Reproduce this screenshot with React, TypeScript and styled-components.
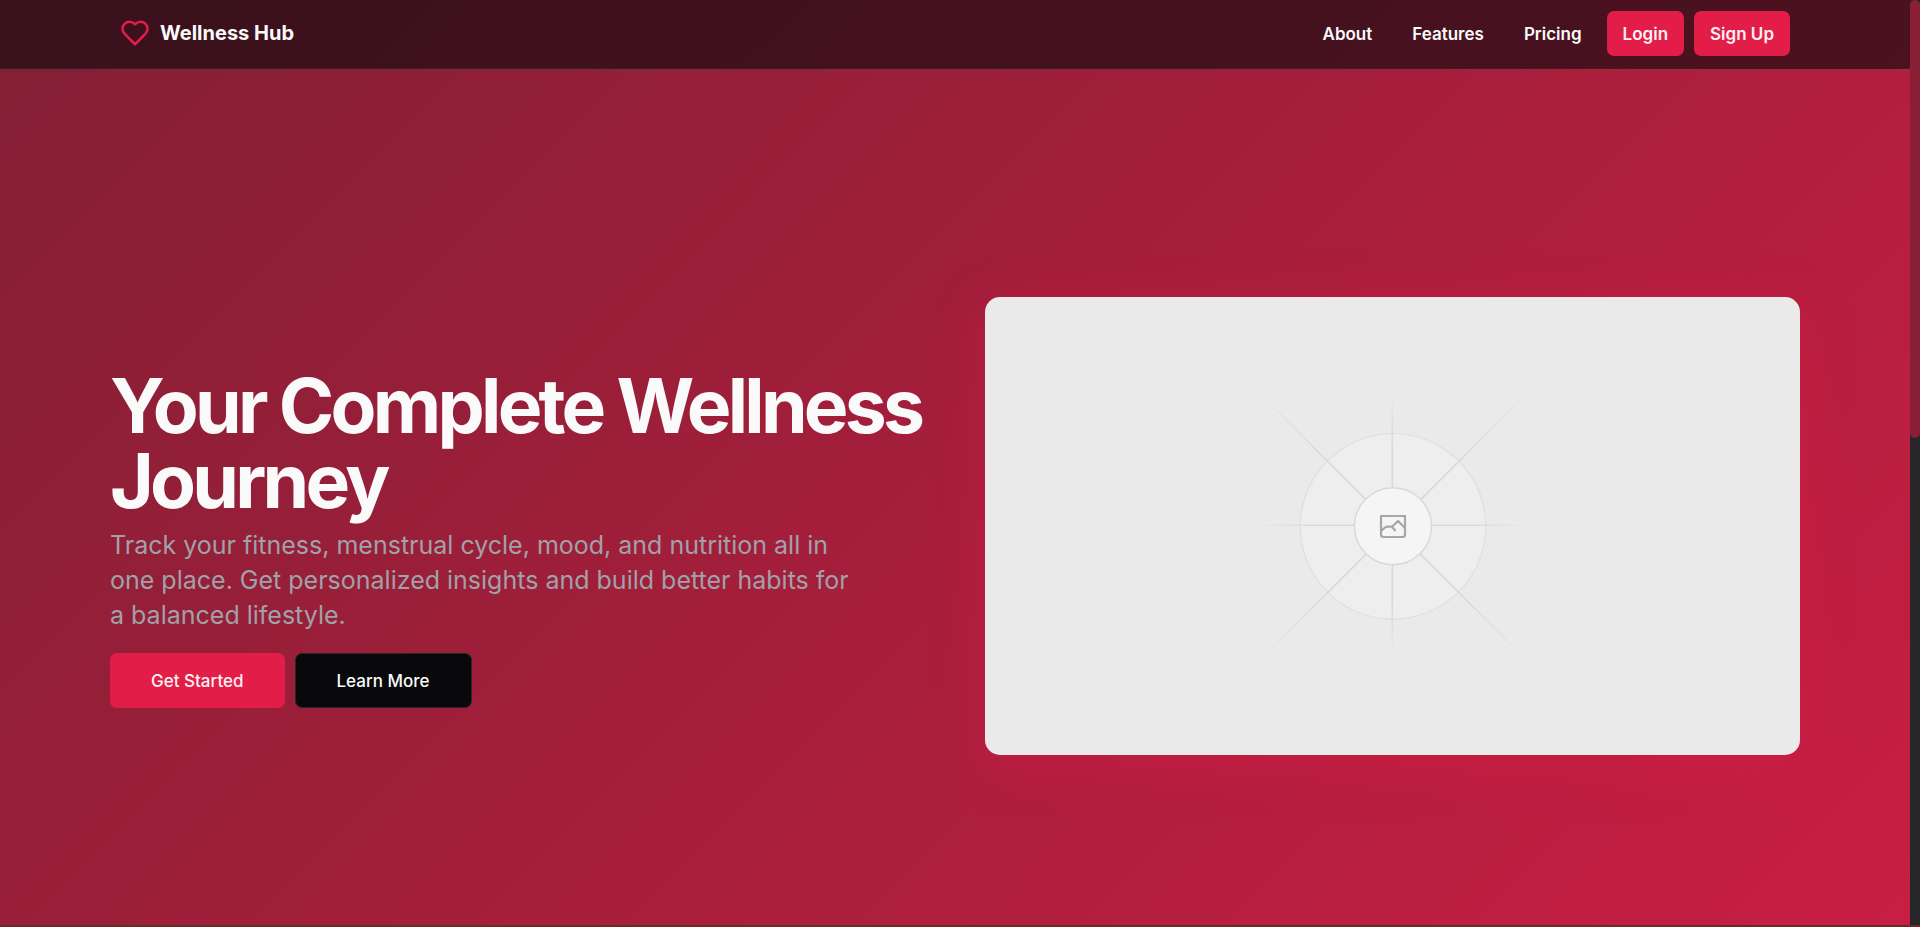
import React from "react";
import styled, { createGlobalStyle } from "styled-components";

const GlobalStyle = createGlobalStyle`
  *, *::before, *::after { box-sizing: border-box; }
  body {
    margin: 0;
    background: #09090b;
    color: #fafafa;
    font-family: Inter, "Liberation Sans", sans-serif;
  }
  h1, p { margin: 0; }
`;

const Screen = styled.div`
  display: grid;
  grid-template-columns: 1fr 10px;
  grid-template-rows: 1fr 2px;
  height: 100vh;
  overflow: hidden;
`;

const Page = styled.div`
  min-height: 0;
  overflow: hidden;
  background: linear-gradient(135deg, #821f34 0%, #c81e43 100%);
`;

const ScrollTrack = styled.div`
  background: #27272a;
`;

const ScrollThumb = styled.div`
  height: 438px;
  border-radius: 5px;
  background: #881f37;
`;

const BottomEdge = styled.div`
  grid-column: 1 / -1;
  background: #6b2a2a;
`;

const Header = styled.header`
  display: flex;
  align-items: center;
  justify-content: space-between;
  height: 69px;
  padding: 0 120px 2px;
  border-bottom: 1px solid #27272a;
  background: rgba(9, 9, 11, 0.6);
`;

const Brand = styled.a`
  display: flex;
  align-items: center;
  gap: 10px;
  color: #fafafa;
  font-size: 20px;
  font-weight: 700;
  line-height: 30px;
  text-decoration: none;
`;

const Nav = styled.nav`
  display: flex;
  align-items: center;
  gap: 10px;
`;

const NavLinks = styled.div`
  display: flex;
  gap: 40px;
  padding-right: 15px;
`;

const NavLink = styled.a`
  padding-top: 2px;
  color: #fafafa;
  font-size: 17px;
  font-weight: 600;
  line-height: 25px;
  text-decoration: none;
`;

const Button = styled.button<{ $size: "small" | "large"; $tone?: "dark" }>`
  height: ${(p) => (p.$size === "small" ? 45 : 55)}px;
  padding: 2px ${(p) => (p.$size === "small" ? 16 : 41)}px 0;
  border: ${(p) => (p.$tone === "dark" ? "1px solid #27272a" : "0")};
  border-radius: 7px;
  background: ${(p) => (p.$tone === "dark" ? "#09090b" : "#e11d48")};
  color: ${(p) => (p.$tone === "dark" ? "#fafafa" : "#fff1f2")};
  font-family: inherit;
  font-size: 17px;
  font-weight: ${(p) => (p.$size === "small" ? 600 : 500)};
  line-height: 25px;
  cursor: pointer;
`;

const Hero = styled.main`
  display: grid;
  grid-template-columns: 1fr 1fr;
  align-items: center;
  gap: 60px;
  min-height: calc(100vh - 13px);
  padding: 0 110px;
`;

const Copy = styled.section`
  display: flex;
  flex-direction: column;
  padding-top: 24px;
`;

const Title = styled.h1`
  font-size: 75px;
  font-weight: 700;
  line-height: 75px;
  letter-spacing: -0.05em;
`;

const Lead = styled.p`
  max-width: 750px;
  margin-top: 10px;
  color: #a1a1aa;
  font-size: 25px;
  line-height: 35px;
`;

const Actions = styled.div`
  display: flex;
  gap: 10px;
  margin-top: 20px;
`;

const Picture = styled.div`
  display: flex;
  align-items: center;
  justify-content: center;
  aspect-ratio: 815 / 458;
  border-radius: 15px;
  background: #eaeaea;
  box-shadow: 0 10px 50px rgba(225, 29, 72, 0.4);
`;

const rays = [0, 45, 90, 135, 180, 225, 270, 315];

function Placeholder() {
  return (
    <svg width="280" height="280" viewBox="-140 -140 280 280" fill="none" role="img" aria-label="Placeholder image">
      <defs>
        <radialGradient id="ray" gradientUnits="userSpaceOnUse" cx="0" cy="0" r="134">
          <stop offset="0.6" stopColor="#d9d9d9" />
          <stop offset="1" stopColor="#d9d9d9" stopOpacity="0" />
        </radialGradient>
        <radialGradient id="diagonal" gradientUnits="userSpaceOnUse" cx="0" cy="0" r="190">
          <stop offset="0.5" stopColor="#d9d9d9" />
          <stop offset="1" stopColor="#d9d9d9" stopOpacity="0" />
        </radialGradient>
      </defs>
      <circle cy=".3" r="92.800" fill="#eeeeee" stroke="#e1e1e1" strokeWidth="1.5" />
      {rays.map((a) => (
        <path
          key={a}
          d={a % 90 ? "M38 -.8H190V.8H38Z" : "M38 -.8H134V.8H38Z"}
          fill={a % 90 ? "url(#diagonal)" : "url(#ray)"}
          transform={`translate(${a % 90 ? ".3 1" : "-.7 -.7"}) rotate(${a})`}
        />
      ))}
      <circle cy=".3" r="38.500" fill="#f5f5f5" stroke="#d9d9d9" strokeWidth="1.5" />
      <g stroke="#a6a6a6" strokeWidth="2.2">
        <path d="M-12 -10H12V8.500Q12 11 9.500 11H-9.500Q-12 11 -12 8.500Z" />
        <path d="M-12 5L-8 1.500Q-7 .7 -5.500 .7H-1L5 -5L12 2M-1 .7L2.500 5" />
      </g>
    </svg>
  );
}

function HeartIcon() {
  return (
    <svg width="30" height="30" viewBox="0 0 24 24" fill="none" stroke="#e11d48" strokeWidth="2" strokeLinecap="round" strokeLinejoin="round" aria-hidden="true">
      <path d="M19 14c1.490-1.460 3-3.210 3-5.500A5.500 5.500 0 0 0 16.500 3c-1.760 0-3 .5-4.500 2-1.500-1.500-2.740-2-4.500-2A5.500 5.500 0 0 0 2 8.500c0 2.300 1.500 4.050 3 5.500l7 7Z" />
    </svg>
  );
}

export default function App() {
  return (
    <Screen>
      <GlobalStyle />
      <Page>
        <Header>
          <Brand href="#">
            <HeartIcon />
            Wellness Hub
          </Brand>
          <Nav>
            <NavLinks>
              <NavLink href="#about">About</NavLink>
              <NavLink href="#features">Features</NavLink>
              <NavLink href="#pricing">Pricing</NavLink>
            </NavLinks>
            <Button $size="small">Login</Button>
            <Button $size="small">Sign Up</Button>
          </Nav>
        </Header>
        <Hero>
          <Copy>
            <Title>Your Complete Wellness Journey</Title>
            <Lead>
              Track your fitness, menstrual cycle, mood, and nutrition all in one place. Get personalized insights and
              build better habits for a balanced lifestyle.
            </Lead>
            <Actions>
              <Button $size="large">Get Started</Button>
              <Button $size="large" $tone="dark">Learn More</Button>
            </Actions>
          </Copy>
          <Picture>
            <Placeholder />
          </Picture>
        </Hero>
      </Page>
      <ScrollTrack>
        <ScrollThumb />
      </ScrollTrack>
      <BottomEdge />
    </Screen>
  );
}
